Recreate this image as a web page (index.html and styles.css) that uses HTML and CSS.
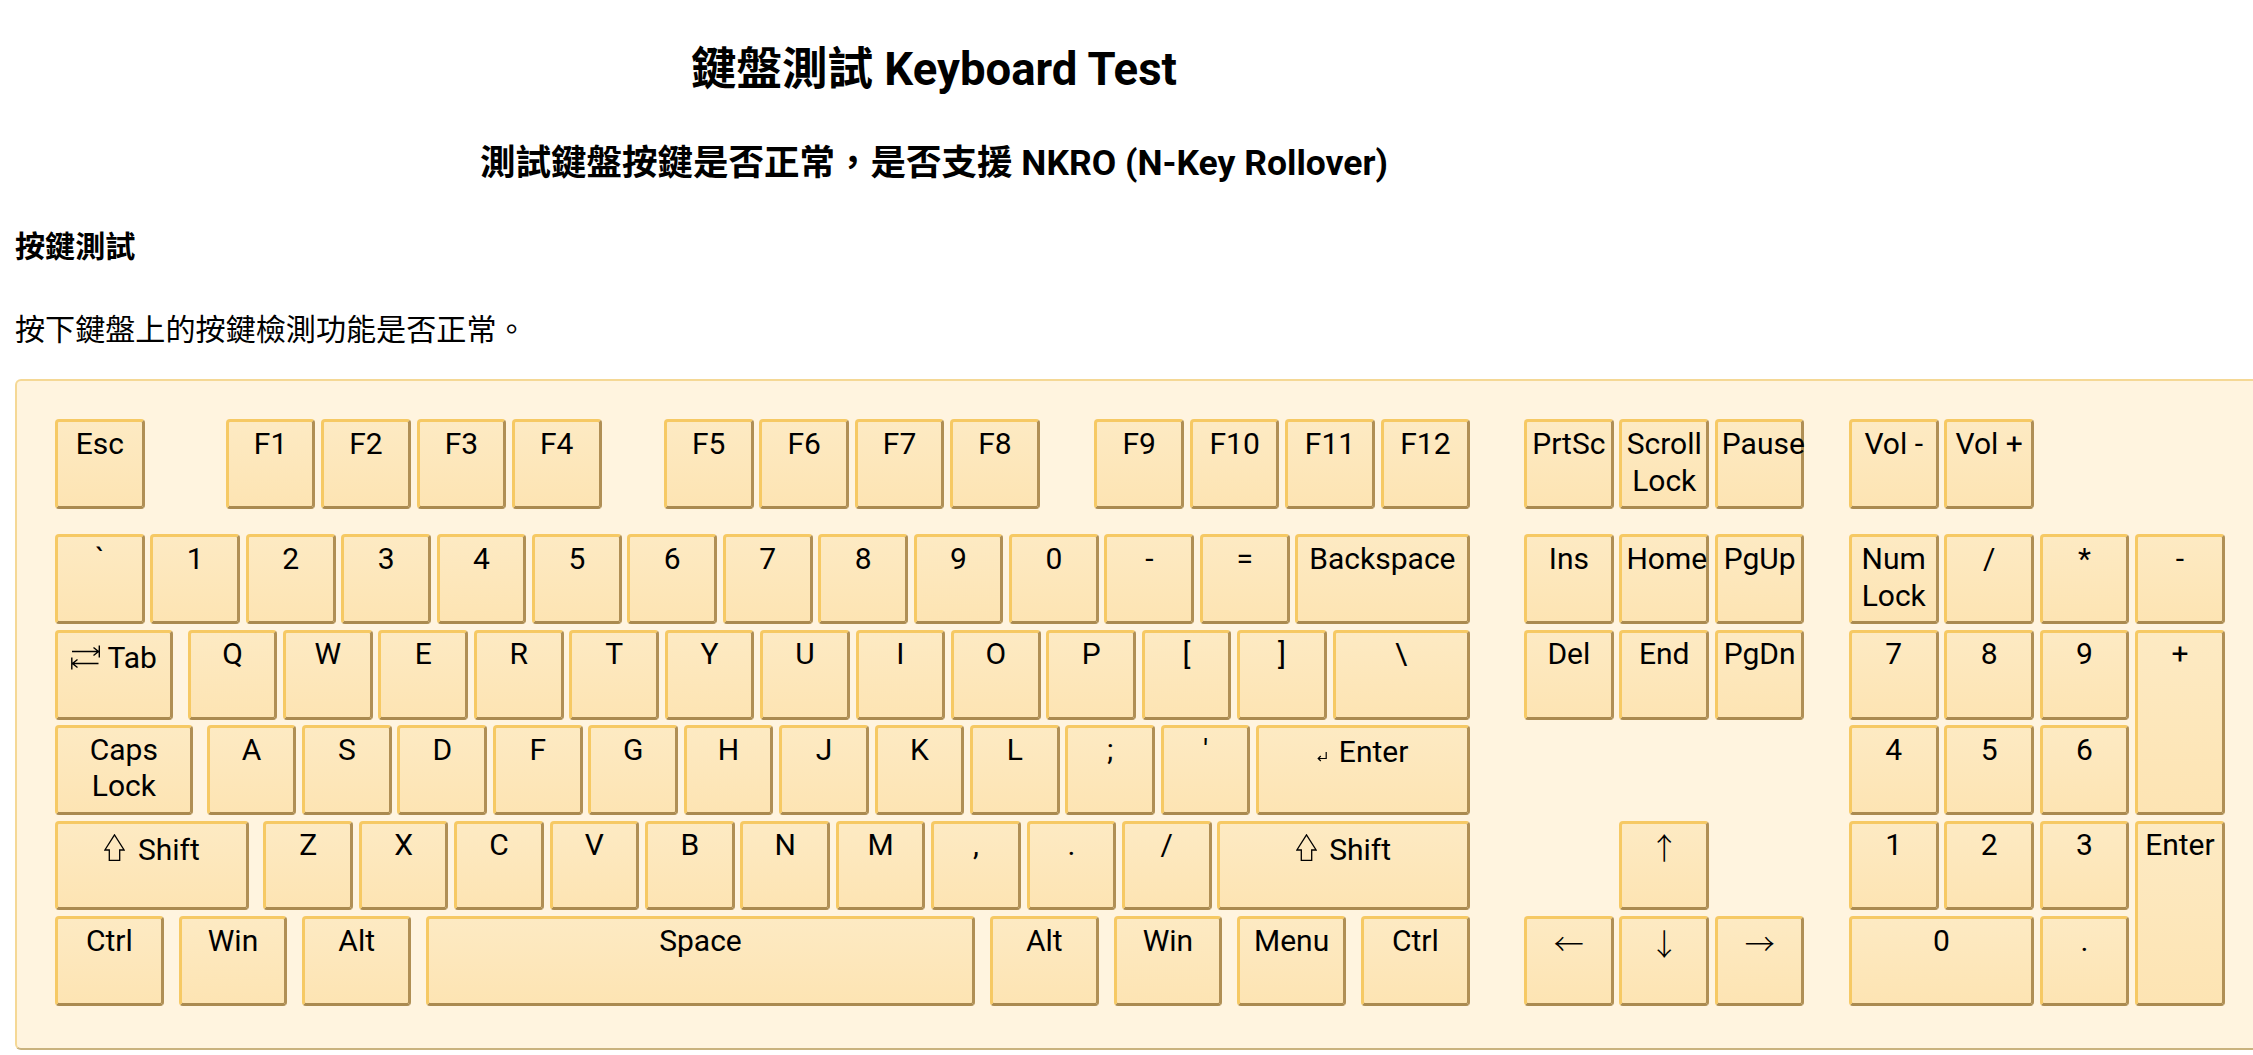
FILE: index.html
```html
<!DOCTYPE html>
<html lang="zh-Hant">
<head>
<meta charset="utf-8">
<title>鍵盤測試 Keyboard Test</title>
<link rel="stylesheet" href="styles.css">
</head>
<body>
<div class="page">
  <h1 class="title">鍵盤測試 Keyboard Test</h1>
  <h2 class="subtitle">測試鍵盤按鍵是否正常<span class="punct">，</span>是否支援 NKRO (N-Key Rollover)</h2>
  <h3 class="section">按鍵測試</h3>
  <p class="desc">按下鍵盤上的按鍵檢測功能是否正常<span class="punct">。</span></p>

  <div class="keyboard">
    <div class="main">
      <div class="fnrow">
        <div class="key">Esc</div>
        <div class="key gap-f1">F1</div>
        <div class="key">F2</div>
        <div class="key">F3</div>
        <div class="key">F4</div>
        <div class="key gap-f5">F5</div>
        <div class="key">F6</div>
        <div class="key">F7</div>
        <div class="key">F8</div>
        <div class="key gap-f9">F9</div>
        <div class="key">F10</div>
        <div class="key">F11</div>
        <div class="key">F12</div>
      </div>
      <div class="rows">
        <div class="row">
          <div class="key">`</div>
          <div class="key">1</div>
          <div class="key">2</div>
          <div class="key">3</div>
          <div class="key">4</div>
          <div class="key">5</div>
          <div class="key">6</div>
          <div class="key">7</div>
          <div class="key">8</div>
          <div class="key">9</div>
          <div class="key">0</div>
          <div class="key">-</div>
          <div class="key">=</div>
          <div class="key fill">Backspace</div>
        </div>
        <div class="row">
          <div class="key tab"><svg class="ico-tab" width="29" height="25" viewBox="0 0 29 25" aria-hidden="true"><path d="M1 6.5H27.5M22.5 2.5L27.5 6.5L22.5 10.5M28.3 0.5V12.5" fill="none" stroke="#000" stroke-width="1.4"/><path d="M1.5 18.5H27.5M6.5 14.5L1.5 18.5L6.5 22.5M0.8 12.5V24.5" fill="none" stroke="#000" stroke-width="1.4"/></svg> Tab</div>
          <div class="key">Q</div>
          <div class="key">W</div>
          <div class="key">E</div>
          <div class="key">R</div>
          <div class="key">T</div>
          <div class="key">Y</div>
          <div class="key">U</div>
          <div class="key">I</div>
          <div class="key">O</div>
          <div class="key">P</div>
          <div class="key">[</div>
          <div class="key">]</div>
          <div class="key fill">\</div>
        </div>
        <div class="row">
          <div class="key caps">Caps Lock</div>
          <div class="key">A</div>
          <div class="key">S</div>
          <div class="key">D</div>
          <div class="key">F</div>
          <div class="key">G</div>
          <div class="key">H</div>
          <div class="key">J</div>
          <div class="key">K</div>
          <div class="key">L</div>
          <div class="key">;</div>
          <div class="key">'</div>
          <div class="key fill enter"><svg class="ico-ret" width="10" height="10" viewBox="0 0 10 10" aria-hidden="true"><path d="M9.2 0V6.5H1.2M3.8 4L1.2 6.5L3.8 9" fill="none" stroke="#000" stroke-width="1.2"/></svg> Enter</div>
        </div>
        <div class="row">
          <div class="key lshift shift"><svg class="ico-shift" width="21" height="27" viewBox="0 0 21 27" aria-hidden="true"><path d="M10.5 0.9L0.9 16H5.3V26.3H15.7V16H20.1Z" fill="none" stroke="#000" stroke-width="1.3" stroke-linejoin="miter"/></svg> Shift</div>
          <div class="key">Z</div>
          <div class="key">X</div>
          <div class="key">C</div>
          <div class="key">V</div>
          <div class="key">B</div>
          <div class="key">N</div>
          <div class="key">M</div>
          <div class="key">,</div>
          <div class="key">.</div>
          <div class="key">/</div>
          <div class="key fill shift"><svg class="ico-shift" width="21" height="27" viewBox="0 0 21 27" aria-hidden="true"><path d="M10.5 0.9L0.9 16H5.3V26.3H15.7V16H20.1Z" fill="none" stroke="#000" stroke-width="1.3" stroke-linejoin="miter"/></svg> Shift</div>
        </div>
        <div class="row mods">
          <div class="key">Ctrl</div>
          <div class="key">Win</div>
          <div class="key">Alt</div>
          <div class="key space">Space</div>
          <div class="key">Alt</div>
          <div class="key">Win</div>
          <div class="key">Menu</div>
          <div class="key">Ctrl</div>
        </div>
      </div>
    </div>

    <div class="nav">
      <div class="fnrow">
        <div class="key">PrtSc</div>
        <div class="key">Scroll Lock</div>
        <div class="key">Pause</div>
      </div>
      <div class="navgrid">
        <div class="key">Ins</div>
        <div class="key">Home</div>
        <div class="key">PgUp</div>
        <div class="key">Del</div>
        <div class="key">End</div>
        <div class="key">PgDn</div>
        <div class="key arrowkey up-pos"><span class="arrow">↑</span></div>
        <div class="key arrowkey r5"><span class="arrow">←</span></div>
        <div class="key arrowkey r5"><span class="arrow">↓</span></div>
        <div class="key arrowkey r5"><span class="arrow">→</span></div>
      </div>
    </div>

    <div class="numpad">
      <div class="fnrow">
        <div class="key">Vol -</div>
        <div class="key">Vol +</div>
      </div>
      <div class="numgrid">
        <div class="key">Num Lock</div>
        <div class="key">/</div>
        <div class="key">*</div>
        <div class="key">-</div>
        <div class="key">7</div>
        <div class="key">8</div>
        <div class="key">9</div>
        <div class="key tall">+</div>
        <div class="key">4</div>
        <div class="key">5</div>
        <div class="key">6</div>
        <div class="key">1</div>
        <div class="key">2</div>
        <div class="key">3</div>
        <div class="key tall">Enter</div>
        <div class="key wide">0</div>
        <div class="key">.</div>
      </div>
    </div>
  </div>
</div>
</body>
</html>
```

FILE: styles.css
```css
* {
  box-sizing: border-box;
}

html {
  overflow: hidden;
}

body {
  margin: 0;
  background: #ffffff;
  color: #000000;
  font-family: Roboto, "Noto Sans CJK JP", sans-serif;
}

.page {
  width: 1868px;
  padding: 40.2px 15px 0;
}

.title {
  margin: 0;
  font-size: 45.5px;
  line-height: 60px;
  font-weight: 700;
  text-align: center;
}

.subtitle {
  margin: 35.8px 0 0;
  font-size: 35.5px;
  line-height: 48px;
  font-weight: 700;
  text-align: center;
}

.punct {
  font-family: "Noto Sans CJK JP", sans-serif;
}

.section {
  margin: 40.2px 0 0;
  font-size: 30.1px;
  line-height: 40px;
  font-weight: 700;
}

.desc {
  margin: 40px 0 0;
  font-size: 30.1px;
  line-height: 40px;
  font-weight: 400;
}

/* keyboard frame */
.keyboard {
  display: flex;
  align-items: flex-start;
  width: max-content;
  margin-top: 29.3px;
  padding: 38px 38px 42px;
  background: #fff4df;
  border: 2px solid #f5d895;
  border-bottom-color: #c9b27e;
  border-radius: 6px;
}

.main {
  width: 1414.6px;
  flex: none;
}

.nav {
  margin-left: 54.4px;
  flex: none;
}

.numpad {
  margin-left: 44.4px;
  flex: none;
}

.fnrow {
  display: flex;
  gap: 5.73px;
  margin-bottom: 25.3px;
}

.rows {
  display: flex;
  flex-direction: column;
  gap: 5.73px;
}

.row {
  display: flex;
  gap: 5.73px;
}

/* key cap */
.key {
  flex: none;
  width: 89.7px;
  height: 89.7px;
  padding: 3.6px 4px 0;
  border: 3px solid;
  border-color: #f6c964 #b08f55 #aa8a50 #f6c964;
  border-radius: 4px;
  background: linear-gradient(#fdeac3, #fde4b3);
  font-size: 30px;
  line-height: 36.6px;
  text-align: center;
  color: #000;
}

.gap-f1 {
  margin-left: 75.3px;
}

.gap-f5 {
  margin-left: 56.6px;
}

.gap-f9 {
  margin-left: 48.8px;
}

.fill {
  flex: 1 1 auto;
  width: auto;
}

.tab {
  width: 117.7px;
  margin-right: 9.27px;
  padding-top: 7px;
}

.caps {
  width: 137.7px;
  margin-right: 8.27px;
}

.lshift {
  width: 194.3px;
  margin-right: 8.27px;
}

.shift {
  padding-top: 7.9px;
}

.enter {
  padding-top: 6px;
}

.ico-tab {
  vertical-align: -2px;
  margin-right: 1px;
}

.ico-shift {
  vertical-align: -1.5px;
  margin-right: 5px;
}

.ico-ret {
  vertical-align: 0;
  margin-right: 4px;
}

.mods {
  gap: 15.1px;
}

.mods .key {
  width: 108.6px;
}

.mods .space {
  flex: 1 1 auto;
  width: auto;
}

/* navigation cluster */
.navgrid {
  display: grid;
  grid-template-columns: repeat(3, 89.7px);
  grid-auto-rows: 89.7px;
  gap: 5.73px;
}

.navgrid .key,
.numgrid .key {
  width: auto;
  height: auto;
}

.up-pos {
  grid-column: 2;
  grid-row: 4;
}

.r5 {
  grid-row: 5;
}

.arrowkey {
  padding-top: 4.5px;
}

.arrow {
  font-family: "Noto Sans CJK JP", sans-serif;
  font-weight: 300;
}

/* numpad */
.numgrid {
  display: grid;
  grid-template-columns: repeat(4, 89.7px);
  grid-auto-rows: 89.7px;
  gap: 5.73px;
}

.tall {
  grid-row: span 2;
}

.wide {
  grid-column: span 2;
}
```
